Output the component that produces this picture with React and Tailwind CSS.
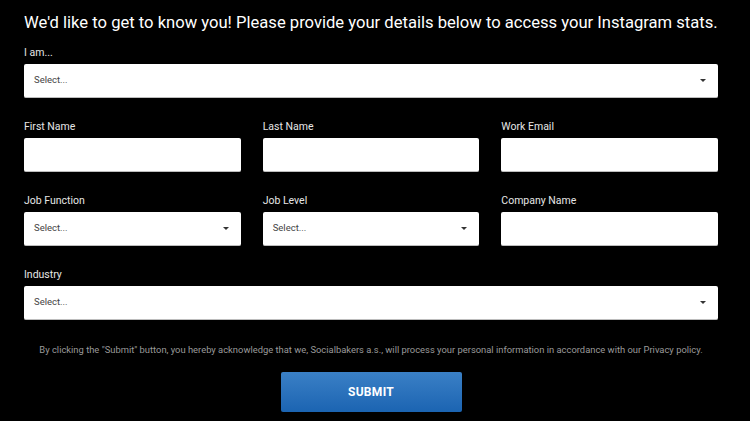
import React from 'react'

const Caret = () => (
  <svg className="w-[6px] h-[3px]" viewBox="0 0 6 3">
    <path d="M0 0h6L3 3z" fill="#333" />
  </svg>
)

const Label = ({ children }) => (
  <div className="h-[14px] leading-[14px] mb-[4px] text-[10.5px] text-[#e6e6e6]">{children}</div>
)

const TextBox = () => <div className="h-[34px] bg-white rounded-[2px] border-b border-[#bdbdbd]" />

const SelectBox = () => (
  <div className="h-[34px] bg-white rounded-[2px] border-b border-[#bdbdbd] flex items-center justify-between pl-[10px] pr-[12px]">
    <span className="text-[9.5px] text-[#444]">Select...</span>
    <Caret />
  </div>
)

const Field = ({ label, select }) => (
  <div className="flex flex-col">
    <Label>{label}</Label>
    {select ? <SelectBox /> : <TextBox />}
  </div>
)

export default function App() {
  return (
    <div className="w-[750px] h-[421px] bg-black overflow-hidden" style={{ fontFamily: 'Roboto, "Noto Sans", sans-serif' }}>
      <div className="pl-6 pr-8 pt-[12px]">
        {/* Header */}
        <h1 className="h-[22px] leading-[22px] text-[16.6px] text-white whitespace-nowrap">
          We'd like to get to know you! Please provide your details below to access your Instagram stats.
        </h1>

        <div className="mt-[12px] flex flex-col gap-[22px]">
          <Field label="I am..." select />
          <div className="grid grid-cols-3 gap-[22px]">
            <Field label="First Name" />
            <Field label="Last Name" />
            <Field label="Work Email" />
          </div>
          <div className="grid grid-cols-3 gap-[22px]">
            <Field label="Job Function" select />
            <Field label="Job Level" select />
            <Field label="Company Name" />
          </div>
          <Field label="Industry" select />
        </div>

        <p className="mt-[24px] h-[12px] leading-[12px] text-center text-[9.4px] text-[#9a9a9a] whitespace-nowrap">
          By clicking the "Submit" button, you hereby acknowledge that we, Socialbakers a.s., will process your personal information in accordance with our Privacy policy.
        </p>

        <div className="mt-[16px] flex justify-center">
          <button className="w-[181px] h-[40px] rounded-[2px] bg-gradient-to-b from-[#3a80c6] to-[#1b64b2] text-white text-[12px] font-bold tracking-wide">
            SUBMIT
          </button>
        </div>
      </div>
    </div>
  )
}
